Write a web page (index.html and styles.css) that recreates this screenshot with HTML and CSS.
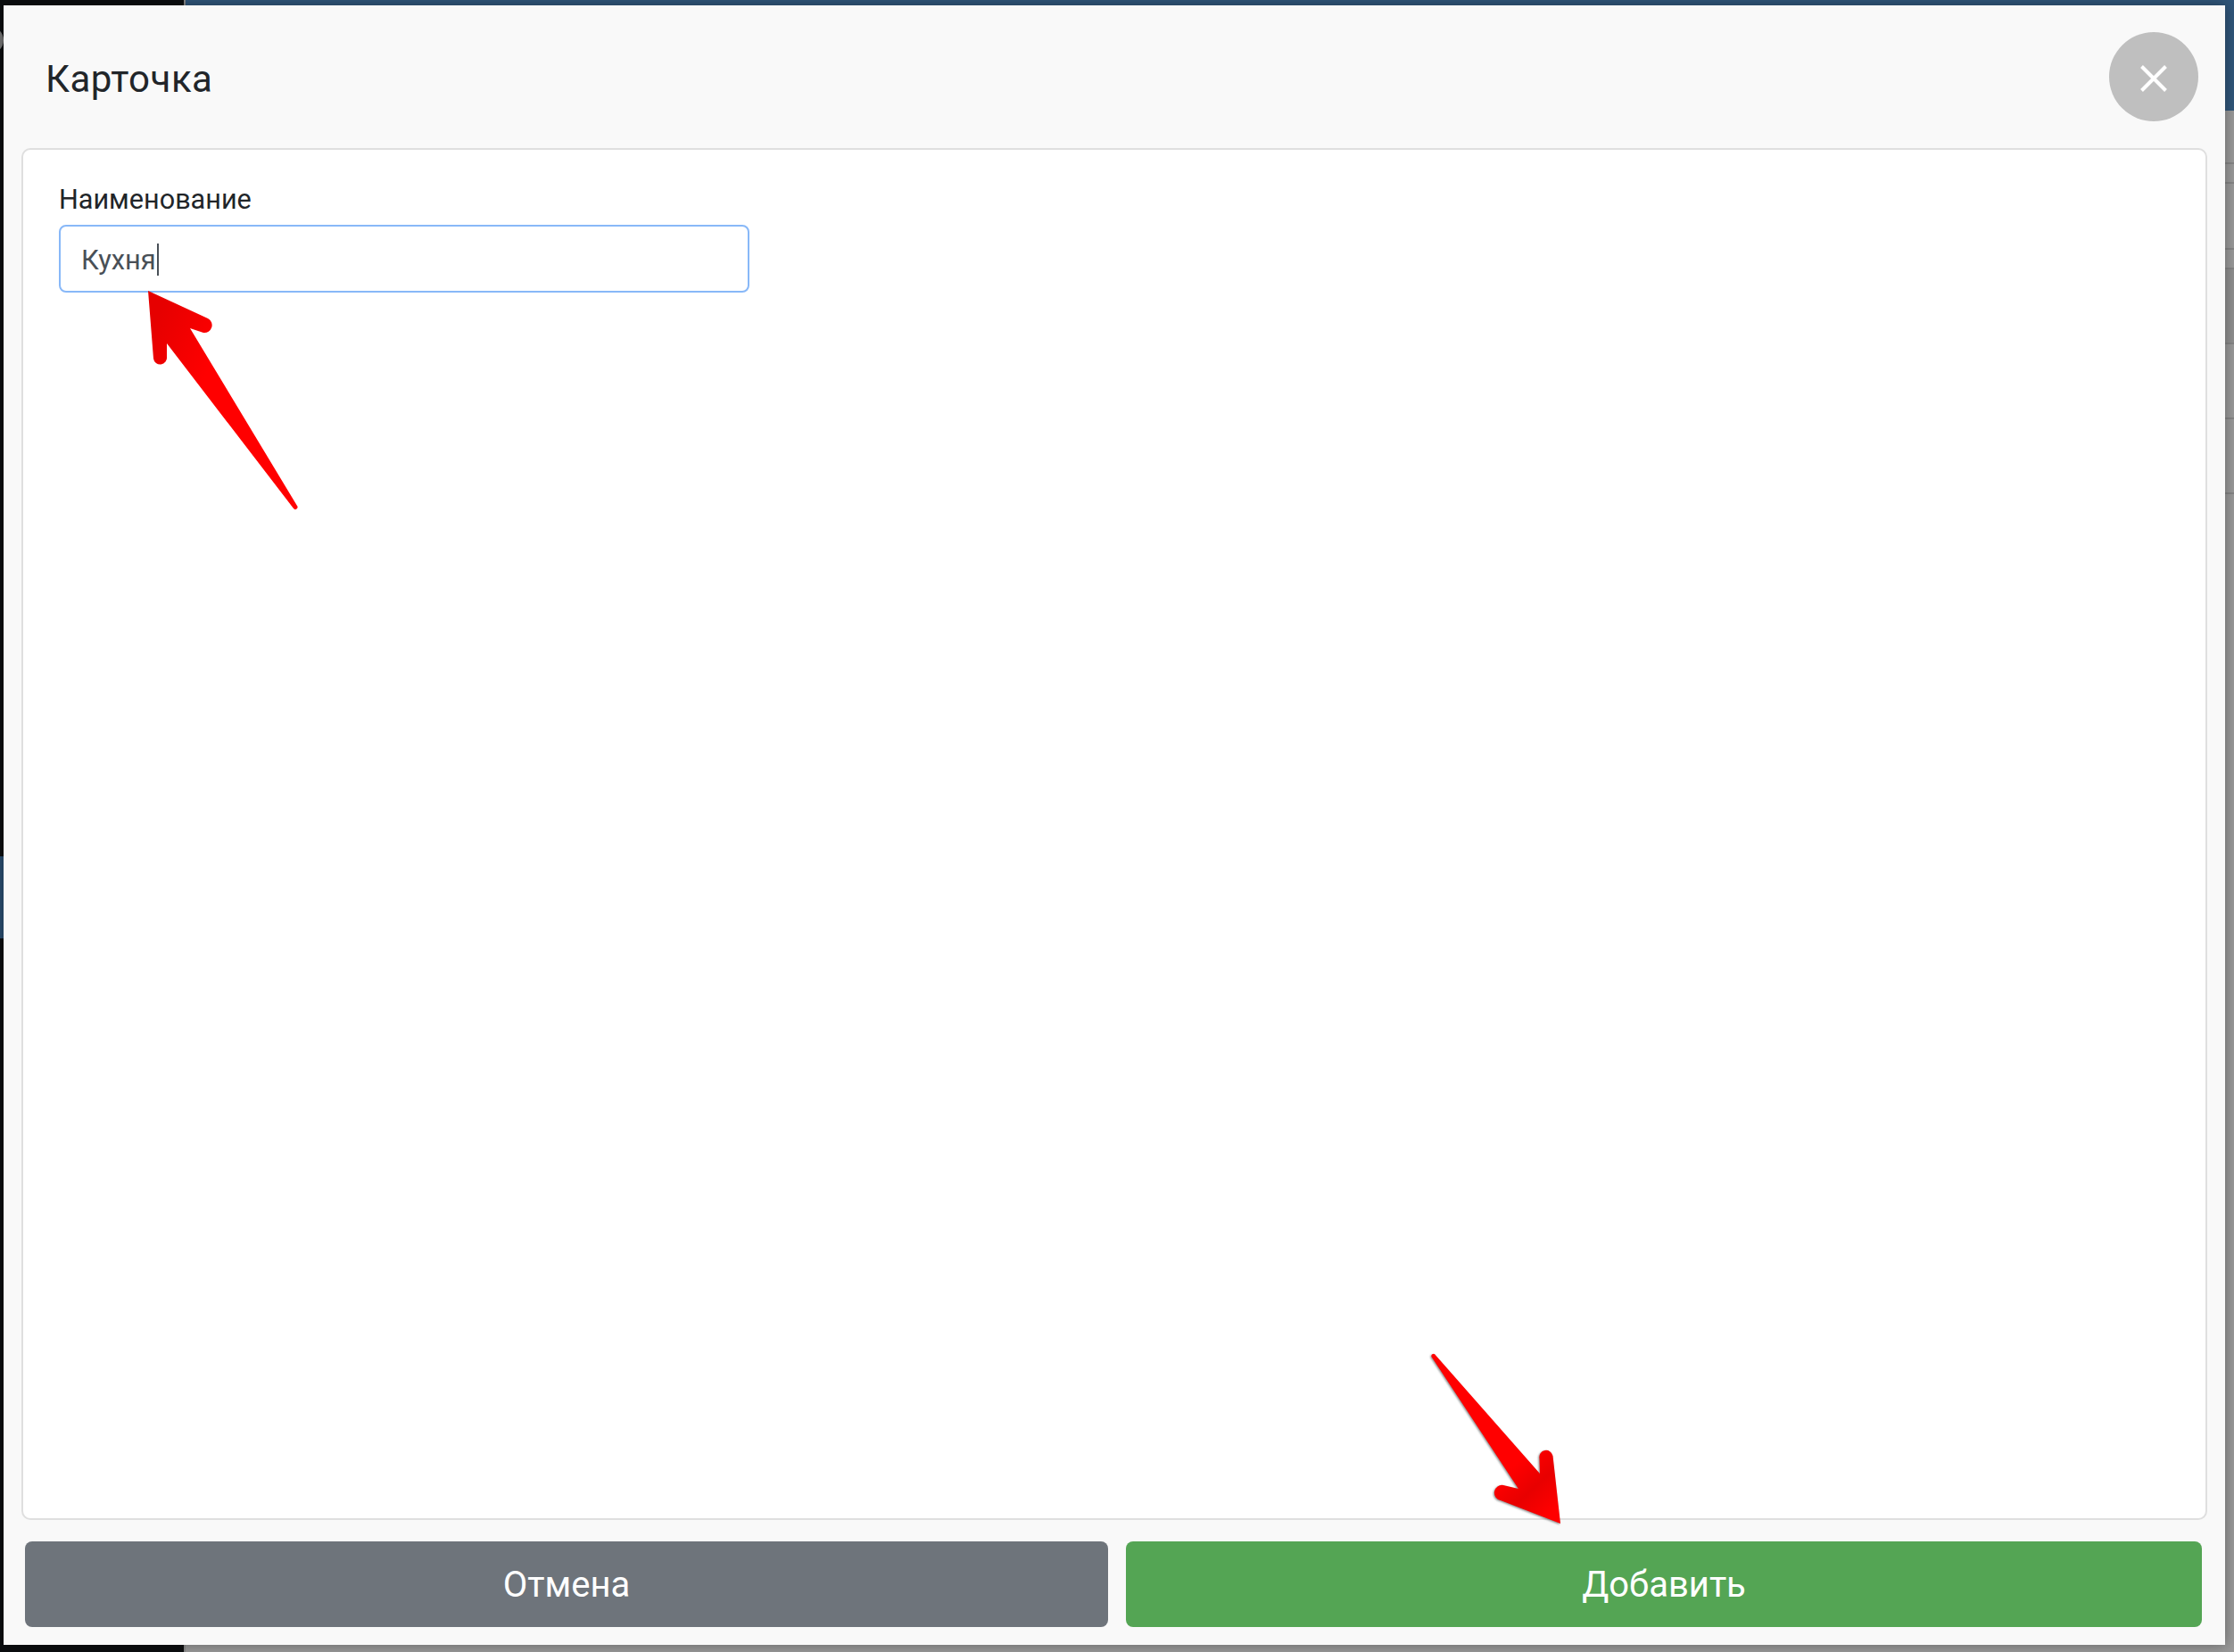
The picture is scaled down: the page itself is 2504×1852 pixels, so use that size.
FILE: index.html
```html
<!DOCTYPE html>
<html lang="ru">
<head>
<meta charset="utf-8">
<title>Карточка</title>
<link rel="stylesheet" href="styles.css">
</head>
<body>
<div class="app">
  <aside class="sidebar">
    <div class="avatar"></div>
    <div class="nav-item"></div>
  </aside>
  <main class="content">
    <div class="topbar"></div>
    <div class="row r1"></div>
    <div class="row r2"></div>
    <div class="row r3"></div>
    <div class="row r4"></div>
    <div class="row r5 dark"></div>
    <div class="row r5"></div>
    <div class="row r5"></div>
    <div class="rest"></div>
  </main>
</div>
<section class="modal">
  <header class="modal-header">
    <h1 class="modal-title">Карточка</h1>
    <button class="close" type="button" aria-label="Закрыть">
      <svg width="30" height="30" viewBox="0 0 30 30"><path d="M1.5 1.5 28.5 28.5M28.5 1.5 1.5 28.5" stroke="#fff" stroke-width="4" fill="none"/></svg>
    </button>
  </header>
  <div class="card">
    <label class="field-label">Наименование</label>
    <div class="input"><span>Кухня</span><i class="caret"></i></div>
  </div>
  <footer class="modal-footer">
    <button class="btn btn-cancel" type="button">Отмена</button>
    <button class="btn btn-add" type="button">Добавить</button>
  </footer>
</section>
<svg class="arrows" width="2504" height="1852" viewBox="0 0 2504 1852">
  <defs>
    <linearGradient id="g1" gradientUnits="userSpaceOnUse" x1="170" y1="370" x2="240" y2="400">
      <stop offset="0" stop-color="#e60000"/><stop offset="1" stop-color="#ff0000"/>
    </linearGradient>
    <linearGradient id="g2" gradientUnits="userSpaceOnUse" x1="1700" y1="1640" x2="1745" y2="1690">
      <stop offset="0" stop-color="#ff0000"/><stop offset=".5" stop-color="#e80000"/><stop offset="1" stop-color="#ff0000"/>
    </linearGradient>
  </defs>
  <path fill="url(#g1)" d="M166 326 233 357A8.5 8.5 0 0 1 228 373L213 368 333 567A2.5 2.5 0 0 1 329 570L187 385 187 400A7.5 7.5 0 0 1 172 402Z"/>
  <path class="shaded" fill="url(#g2)" d="M1604.500 1521A2.500 2.500 0 0 1 1608 1518L1726 1652 1725.500 1635A7.500 7.500 0 0 1 1740.500 1632L1749 1708 1682 1682A8.500 8.500 0 0 1 1685 1665L1702 1669Z"/>
</svg>
</body>
</html>
```
FILE: styles.css
```css
* { box-sizing: border-box; }
html, body { margin: 0; height: 100%; overflow: hidden; }
body { font-family: "Roboto", "Inter", sans-serif; color: #212529; background: #999; }
.app { display: flex; height: 1852px; }
.sidebar { width: 206px; flex: none; background: #0c0e10; padding-top: 30px; }
.avatar { width: 30px; height: 30px; margin-left: -26px; border-radius: 50%; background: #777; }
.nav-item { height: 92px; margin-top: 900px; background: #2a4e70; }
.content { flex: 1; display: flex; flex-direction: column; background: #999; border-left: 2px solid #888; }
.topbar { height: 124px; background: #30567a; }
.row { border-bottom: 2px solid #858585; background: #999; }
.r1 { height: 60px; }
.r2 { height: 22px; }
.r3 { height: 74px; }
.r4 { height: 22px; }
.r5 { height: 84px; }
.dark { background: #8f8f8f; }
.rest { flex: 1; }
.modal { position: absolute; left: 4px; top: 6px; width: 2490px; height: 1838px; display: flex; flex-direction: column; background: #f9f9f9; box-shadow: 0 0 14px rgba(0,0,0,.35); }
.modal-header { height: 160px; flex: none; display: flex; align-items: flex-start; justify-content: space-between; padding: 30px 30px 0 47px; }
.modal-title { margin: 29px 0 0; font-size: 42px; line-height: 48px; font-weight: 400; letter-spacing: .5px; }
.close { width: 100px; height: 100px; border: 0; border-radius: 50%; background: #bfbfbf; padding: 4px 0 0; display: flex; align-items: center; justify-content: center; }
.close svg { display: block; }
.card { flex: 1; margin: 0 20px; padding: 38px 40px; background: #fff; border: 2px solid #dfdfdf; border-radius: 10px; }
.field-label { display: block; font-size: 30.6px; line-height: 36px; margin-bottom: 10px; }
.input { width: 774px; height: 76px; display: flex; align-items: center; padding: 2px 24px 0 23px; border: 2px solid #88b8f8; border-radius: 8px; background: #fff; color: #495057; font-size: 30.8px; }
.caret { width: 2px; height: 36px; margin-left: 1px; background: #495057; }
.modal-footer { flex: none; display: grid; grid-template-columns: 1214px 1206px; gap: 20px; padding: 24px 0 20px 24px; }
.btn { height: 96px; border: 0; border-radius: 8px; color: #fff; font: inherit; font-size: 40px; }
.btn-cancel { background: #6e747b; }
.btn-add { background: #54a554; }
.arrows { position: absolute; left: 0; top: 0; pointer-events: none; }
.shaded { filter: drop-shadow(-1px 1px 1px rgba(60,60,60,.6)); }
```
